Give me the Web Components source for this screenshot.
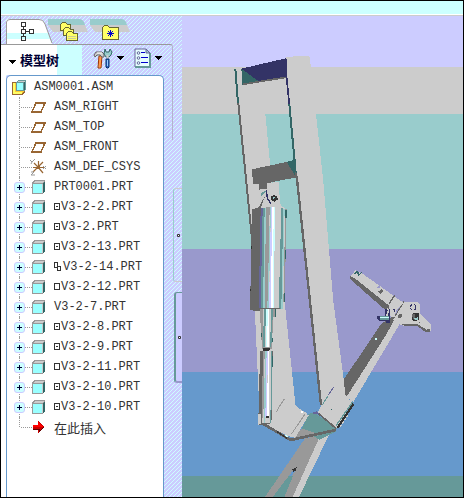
<!DOCTYPE html>
<html lang="zh-CN">
<head>
<meta charset="utf-8">
<title>ASM0001.ASM</title>
<style>
body { margin: 0; }
</style>
</head>
<body>
<cad-window></cad-window>
<script>
const reset = `*{box-sizing:border-box}button{appearance:none;border:0;padding:0;margin:0;background:none;color:inherit;font:inherit;display:block}svg{display:block}`;
const hatch = `linear-gradient(135deg,#cff 0 18%,#ccf 18% 56%,#cff 56% 68%,#ccf 68%) 0 0/4px 4px`;
const define = (name, html) => customElements.define(name, class extends HTMLElement {
  connectedCallback() {
    if (this.shadowRoot) return;
    const t = document.createElement('template');
    t.innerHTML = `<style>${reset}</style>` + (typeof html === 'function' ? html(this) : html);
    this.attachShadow({ mode: 'open' }).append(t.content.cloneNode(true));
  }
});

const icons = {
  asm: `<svg width="14" height="15" viewBox="0 0 14 15" shape-rendering="crispEdges"><path d="M0 2H4V10H13V12L10 15H0Z" fill="#963"/><path d="M1 3H4V11H12L10 14H1Z" fill="#fc3"/><path d="M1 3H3V12H10V14H1Z" fill="#ff6"/><path d="M4 2L6 0H14V9L12 11H4Z" fill="#699"/><path d="M5 2L6 1H13L12 2Z" fill="#ccc"/><rect x="5" y="3" width="6" height="7" fill="#9ff"/><path d="M12 2L13 1V9L12 10Z" fill="#366"/></svg>`,
  plane: `<svg width="15" height="11" viewBox="0 0 15 11" shape-rendering="crispEdges"><path d="M5 1H14L10 10H1Z" fill="none" stroke="#963" stroke-width="1.500"/></svg>`,
  csys: `<svg width="17" height="17" viewBox="0 0 17 17" fill="none"><path d="M8.500 8V2M8 8L4 4M3 8.500H14M8 8L3 13M8 8L13 14M8 8L13 3" stroke="#963" stroke-width="1.200"/><path d="M7 7H10V10H7Z" fill="#963"/><path d="M0 1L2 3L5 0M2 3L1 5M13 7L16 10M16 7L13 10M1 13H4L1 16H5" stroke="#999"/></svg>`,
  part: `<svg width="13" height="14" viewBox="0 0 13 14" shape-rendering="crispEdges"><path d="M0 3L2 0H13V11L11 14H0Z" fill="#999"/><path d="M1 3L3 1H12L10 3Z" fill="#ccc"/><rect x="1" y="4" width="9" height="9" fill="#9ff"/><rect x="10" y="4" width="1" height="9" fill="#ccc"/><path d="M11 3L13 1V11L11 14Z" fill="#366"/></svg>`,
  insert: `<svg width="11" height="12" viewBox="0 0 11 12" shape-rendering="crispEdges"><path d="M0 4H5V0L11 6L5 12V8H0Z" fill="#c00"/><path d="M0 4H5V1L10 6H0Z" fill="#f00"/><path d="M0 8H6V11L11 6" fill="none" stroke="#600"/></svg>`
};
const marks = {
  dot: `<svg width="7" height="10" viewBox="0 0 7 10" shape-rendering="crispEdges"><path d="M.5 1.500H5.500V7.500H.5Z" fill="none" stroke="#333"/><rect x="2" y="4" width="2" height="1" fill="#333"/></svg>`,
  box: `<svg width="7" height="10" viewBox="0 0 7 10" shape-rendering="crispEdges"><path d="M.5 1.500H5.500V7.500H.5Z" fill="none" stroke="#333"/></svg>`,
  pair: `<svg width="9" height="10" viewBox="0 0 9 10" shape-rendering="crispEdges"><path d="M.5 .5H3.500V5.500H.5ZM3.500 4.500H6.500V8.500H3.500Z" fill="none" stroke="#333"/></svg>`
};

define('tree-item', el => {
  const icon = el.getAttribute('icon'), mark = el.getAttribute('mark'), root = icon === 'asm';
  return `<style>
  :host{display:flex;align-items:center;height:20px;padding-left:${root ? 5 : 7}px;position:relative;white-space:pre;color:#333;
    font:12px "Liberation Mono","Noto Sans CJK SC",monospace}
  .cn{font-size:13px}
  .node{width:11px;height:20px;flex:none;display:flex;align-items:center}
  .node::before{content:"";position:absolute;left:12px;top:0;height:${icon === 'insert' ? '50%' : '100%'};border-left:1px dotted #999}
  .lead{width:${icon === 'part' ? 7 : 11}px;border-top:1px dotted #999;flex:none;margin-left:${icon === 'part' ? 0 : -4}px}
  .icon{width:22px;flex:none;display:flex;align-items:center}
  .icon svg{margin-left:${icon === 'insert' ? 1 : icon === 'csys' ? -2 : icon === 'plane' ? -1 : 0}px}
  button{width:11px;height:11px;padding:1px;position:relative;background:#cff;border:1px solid #ccf;border-radius:3px}
  </style>
  ${root ? '' : `<span class="node">${icon === 'part' ? `<button aria-label="展开"><svg width="7" height="7" viewBox="0 0 7 7" shape-rendering="crispEdges"><path d="M1 3.500H6M3.500 1V6" stroke="#003"/></svg></button>` : ''}</span><span class="lead"></span>`}
  <span class="icon">${icons[icon]}</span>${mark ? marks[mark] : ''}<span class="${icon === 'insert' ? 'cn' : ''}"><slot></slot></span>`;
});

const row = (icon, text, mark = '') => `<li><tree-item icon="${icon}" mark="${mark}">${text}</tree-item></li>`;
define('model-tree', `<style>
  :host{display:block;background:#fff;border:1px solid #69c;border-bottom:0;border-radius:5px 5px 0 0;flex:1;margin-left:5px;padding-top:1px}
  ul{list-style:none;margin:0;padding:0}
</style><ul>${[
  row('asm', 'ASM0001.ASM'), row('plane', 'ASM_RIGHT'), row('plane', 'ASM_TOP'), row('plane', 'ASM_FRONT'),
  row('csys', 'ASM_DEF_CSYS'), row('part', 'PRT0001.PRT'), row('part', 'V3-2-2.PRT', 'dot'), row('part', 'V3-2.PRT', 'dot'),
  row('part', 'V3-2-13.PRT', 'dot'), row('part', 'V3-2-14.PRT', 'pair'), row('part', 'V3-2-12.PRT', 'box'), row('part', 'V3-2-7.PRT'),
  row('part', 'V3-2-8.PRT', 'dot'), row('part', 'V3-2-9.PRT', 'dot'), row('part', 'V3-2-11.PRT', 'box'),
  row('part', 'V3-2-10.PRT', 'dot'), row('part', 'V3-2-10.PRT', 'dot'), row('insert', '在此插入')
].join('')}</ul>`);

const folder = (x, y, w, h) => `<path d="M${x + .5} ${y + h - .5}V${y + 2.5}L${x + 2.5} ${y + .5}H${x + 5.5}L${x + 7.5} ${y + 2.5}H${x + w - .5}V${y + h - .5}Z" fill="#ff6" stroke="#663"/>`;
define('nav-tabs', `<style>
  :host{display:flex;height:28px;padding:3px 0 0 5px}
  button{width:42px;height:25px}
  button:first-child{width:47px;margin-right:-5px}
  svg{overflow:visible}
</style>
<button aria-label="模型树" aria-pressed="true"><svg width="47" height="25" viewBox="0 0 47 25">
  <path d="M0 25V3Q0 0 3 0H33Q37 0 39 5L46 25Z" fill="#fff"/><path d="M1 14H42L46 25H1Z" fill="#cff"/><path d="M1 20H44L46 25H1Z" fill="#fff"/>
  <path d="M.5 25V3Q1 .5 4 .5H33Q37 0 39 5L46 24" fill="none" stroke="#999"/>
  <g fill="none" stroke="#333" shape-rendering="crispEdges"><path d="M15.500 3.500H19.500V7.500H15.500ZM15.500 10.500H19.500V14.500H15.500ZM15.500 17.500H19.500V21.500H15.500ZM23.500 10.500H27.500V14.500H23.500ZM17.500 7.500V10.500M17.500 14.500V17.500M19.500 12.500H23.500"/></g></svg></button>
<button aria-label="文件夹浏览器"><svg width="42" height="25" viewBox="0 0 42 25">
  <path d="M0 0H32Q36 1 37 6H0Z" fill="#9cc"/><path d="M0 6H37L40 13H5Z" fill="#ccc"/>
  <g shape-rendering="crispEdges">${folder(12, 3, 11, 9)}${folder(15, 8, 11, 9)}${folder(18, 12, 12, 10)}<path d="M20 17H28M20 19H28" stroke="#cc9"/></g></svg></button>
<button aria-label="收藏夹"><svg width="42" height="25" viewBox="0 0 42 25">
  <path d="M0 0H32Q36 1 37 6H0Z" fill="#9cc"/><path d="M0 6H37L40 13H5Z" fill="#ccc"/>
  <g shape-rendering="crispEdges">${folder(12, 6, 17, 15)}</g><path d="M20.500 11V18M17 14.500H24M18 12L23 17M23 12L18 17" stroke="#00c"/></svg></button>`);

const arrow = `<svg width="7" height="4" viewBox="0 0 7 4" shape-rendering="crispEdges"><path d="M0 0H7L3.500 4Z" fill="#000"/></svg>`;
define('tree-header', `<style>
  :host{display:flex;align-items:center;height:31px;border-top:1px solid #999;padding:0 2px 0 8px;
    background:linear-gradient(90deg,#fff 56px,#cff 56px 81px,transparent 81px)}
  .title{display:flex;align-items:center;gap:4px;font:bold 13px "Noto Sans CJK SC",sans-serif;color:#003;line-height:20px}
  .title svg{margin-top:3px}
  .tool{display:flex;align-items:center;gap:4px}
  .tools{display:flex;gap:10px;margin:-4px 0 0 auto}
</style>
<button class="title">${arrow}<span>模型树</span></button>
<div class="tools">
<button class="tool" aria-label="设置"><svg width="20" height="21" viewBox="0 0 20 21">
  <path d="M6 8H9L8 20H5Z" fill="#fc9" stroke="#930"/><path d="M7 9V19" stroke="#f60"/>
  <path d="M1 7L3 4H9L11 6V9H9L7 7H4L2 9Z" fill="#ccc" stroke="#666"/><path d="M4 5H9" stroke="#fff"/>
  <path d="M12 1L13 4L16 4L17 1L19 4L18 7L16 9H13L11 6Z" fill="#9cc" stroke="#366"/><path d="M14.500 7V11" stroke="#ccc" stroke-width="2"/><path d="M13 11H16V19L15 20H14L13 19Z" fill="#36c" stroke="#036"/><path d="M14.500 12V18" stroke="#9cf"/></svg>${arrow}</button>
<button class="tool" aria-label="显示"><svg width="17" height="20" viewBox="0 0 17 20">
  <path d="M1 1H12L16 5V19H1Z" fill="#e6ffff" stroke="#669"/><path d="M1 19H16V5" fill="none" stroke="#699" stroke-width="2"/><path d="M12 1V5H16Z" fill="#9cc" stroke="#669"/>
  <g fill="none" stroke="#669"><circle cx="4.500" cy="5" r="1.300"/><circle cx="4.500" cy="10" r="1.300"/><circle cx="4.500" cy="15" r="1.300"/></g><path d="M7 4.500H11M7 9.500H14M7 14.500H14" stroke="#00c"/></svg>${arrow}</button>
</div>`);

define('side-rail', `<style>
  :host{display:flex;flex-direction:column;width:18px;flex:none}
  .edge{width:9px;height:96px;border:1px solid #999;border-width:1px 1px 0 0;border-radius:0 3px 0 0;border-right-color:#b3b3cc}
  .grip{align-self:flex-end;width:9px;height:94px;display:flex;align-items:center;justify-content:center;border:1px solid #ccc;border-right:0;border-left-color:#9cc;border-radius:3px 0 0 3px}
  .first{margin:48px 0 10px}
  .second{width:8px;height:91px;background:#ccf;border:2px solid #699;border-width:1px 0 2px 2px;border-color:#699 #699 #99c #699}
</style>
<div class="edge"></div>
<button class="grip first" aria-label="折叠导航器"><svg width="3" height="3"><path d="M.5 .5H2.500V2.500H.5Z" fill="#fff" stroke="#333"/></svg></button>
<button class="grip second" aria-label="折叠浏览器"><svg width="3" height="3"><path d="M.5 .5H2.500V2.500H.5Z" fill="#fff" stroke="#333"/></svg></button>`);

define('model-view', `<style>:host{display:block;flex:1;min-width:0;position:relative;overflow:hidden;background:#699}
  svg{position:absolute;inset:0;width:100%;height:100%}</style>
<svg viewBox="36 48 843 1443" preserveAspectRatio="xMinYMin slice" shape-rendering="crispEdges" role="img" aria-label="ASM0001">
  <path d="M0 0H1200V201H0Z" fill="#ccf"/><path d="M0 201H1200V342H0Z" fill="#ccc"/><path d="M0 342H1200V747H0Z" fill="#9cc"/><path d="M0 747H1200V1116H0Z" fill="#99c"/><path d="M0 1116H1200V1428H0Z" fill="#69c"/><path d="M0 1428H1200V1700H0Z" fill="#699"/>
  <!-- lower beam -->
  <path d="M405 1315L470 1300L372 1491H285Z" fill="#999"/>
  <path d="M368 1413L380 1404L366 1428H356Z" fill="#69c"/><path d="M356 1428H369L343 1491H308Z" fill="#699"/>
  <path d="M366 1408L380 1401L378 1412L370 1415Z" fill="#333"/>
  <path d="M447 1315L484 1292L460 1340L387 1491H368Z" fill="#ccc"/>
  <!-- diagonal arm -->
  <path d="M633 972L680 940L670 990L532 1192L523 1178V1136Z" fill="#666"/>
  <path d="M702 905L735 905L690 970L675 996L550 1206L527 1190L650 988Z" fill="#ccc"/>
  <path d="M655 975L672 960L650 1002L530 1190L523 1180V1150Z" fill="#666"/>
  <path d="M702 905L650 988" stroke="#666" stroke-width="3"/><rect x="615" y="1014" width="5" height="5" fill="#cff"/>
  <!-- end bracket -->
  <path d="M541 829L556 811L576 820L700 908L672 940L650 930L630 914L541 838Z" fill="#ccc"/>
  <path d="M541 829L556 836L657 917L660 934L646 930L630 916L541 838Z" fill="#666"/>
  <path d="M550 825L561 818L564 828L575 820L578 813L568 823L566 817L559 812Z" fill="#366"/>
  <path d="M620 865L630 855L632 862Z" fill="#99c"/><path d="M624 875L636 867L641 873L632 881Z" fill="#666"/>
  <path d="M657 912L674 886" stroke="#666" stroke-width="4"/>
  <path d="M702 905H740L749 914V940L783 973V994L768 997L743 979H708L678 970Z" fill="#ccc"/>
  <path d="M685 969L748 967L781 990V997H768L743 979H708Z" fill="#666"/><path d="M685 969H743L770 985L783 976" stroke="#ccc" stroke-width="7" fill="none"/>
  <path d="M726 942L735 938H743L748 943V957L740 963H730L725 957Z" fill="#333"/><path d="M727 943L735 940V960L728 957Z" fill="#666"/><path d="M732 956L745 951L744 959L738 962Z" fill="#9cc"/>
  <circle cx="690" cy="948" r="6" fill="#666"/><path d="M719 920L726 914M720 924L726 929M732 913L738 918L737 927L731 929" stroke="#336" stroke-width="3" fill="none"/>
  <path d="M646 928H661V970H648L644 940Z" fill="#336"/><path d="M660 925L678 931L674 952L660 949Z" fill="#ccc"/><path d="M667 927L677 929L675 937Z" fill="#336"/>
  <path d="M621 948H659V963H628L621 957Z" fill="#336"/><path d="M630 949H658V960H630Z" fill="#699"/><path d="M631 952H658" stroke="#cff" stroke-width="4"/><path d="M650 923L656 930L650 948" stroke="#ccc" stroke-width="4" fill="none"/>
  <!-- left beam -->
  <path d="M194 201H278L286 342L300 490L328 710L346 925L377 1220L412 1240L365 1312L270 1272L242 655L205 310Z" fill="#ccc"/>
  <path d="M196 207L204 310" stroke="#366" stroke-width="6"/><path d="M205 310L246 715" stroke="#666" stroke-width="6"/>
  <!-- joint at the base -->
  <path d="M415 1242L430 1237L500 1283L498 1295L448 1319L395 1288Z" fill="#699"/>
  <path d="M395 1285L455 1305L370 1318Z" fill="#999"/>
  <path d="M377 1216L404 1242L416 1246L375 1314L350 1300L340 1240Z" fill="#ccc"/>
  <path d="M405 1242L364 1303M320 1235L326 1222L344 1196" stroke="#999" stroke-width="3" fill="none"/>
  <path d="M282 1273L362 1320L498 1290" stroke="#666" stroke-width="8" fill="none"/><path d="M320 1294L352 1316" stroke="#333" stroke-width="3"/><path d="M343 1305L354 1307L352 1314Z" fill="#cff"/><path d="M392 1234H400V1239H392Z" fill="#fff"/>
  <!-- right beam -->
  <path d="M347 175L352 170L418 168L422 195L438 342L460 545L490 905L520 1130L527 1190L548 1206L498 1288L443 1240L455 1213L380 530L348 235Z" fill="#ccc"/>
  <path d="M349 177L350 235L358 313" stroke="#336" stroke-width="5" fill="none"/><path d="M358 313L378 528" stroke="#366" stroke-width="6"/><path d="M380 528L453 1216" stroke="#666" stroke-width="7"/>
  <path d="M443 1239L498 1285" stroke="#666" stroke-width="5"/><path d="M456 1216L474 1188" stroke="#699" stroke-width="3"/><path d="M474 1186L491 1161" stroke="#669" stroke-width="3"/><path d="M428 1236L440 1234L446 1241H430Z" fill="#669"/><rect x="483" y="1226" width="4" height="4" fill="#366"/>
  <path d="M498 1277L548 1206" stroke="#699" stroke-width="4"/><path d="M502 1284L550 1212" stroke="#333" stroke-width="6"/><path d="M510 1280L534 1246" stroke="#ccc" stroke-width="4" stroke-dasharray="7 5"/>
  <!-- cross members -->
  <path d="M214 206L347 175L350 232L266 246Z" fill="#336"/><path d="M214 206L266 244L217 254Z" fill="#366"/><path d="M218 253L348 232" stroke="#666" stroke-width="5"/>
  <path d="M245 508L350 486L378 478L380 532L302 547L291 570H268V553H250Z" fill="#666"/><path d="M350 486L378 478L376 528Z" fill="#366"/>
  <!-- cylinder mount -->
  <path d="M291 550L326 545L330 610L338 626H270L288 585Z" fill="#ccc"/>
  <path d="M270 568H290V582L280 592L272 582Z" fill="#ccc"/><path d="M273 585L286 573" stroke="#699" stroke-width="5"/>
  <path d="M287 583L267 622L246 628L244 740L240 930L272 935L272 625Z" fill="#666"/><path d="M289 570L292 595L303 611" fill="none" stroke="#336" stroke-width="4"/>
  <path d="M302 590L310 585L322 588L323 599L314 605L304 601Z" fill="#333"/><path d="M308 590L316 590L309 598Z" fill="#9cc"/>
  <!-- cylinder -->
  <path d="M274 622H340L348 628L341 933L322 928L266 926Z" fill="#ccc"/>
  <path d="M272 624H278L272 924H266Z" fill="#669"/><path d="M278 624H284L279 924H272Z" fill="#699"/><path d="M284 624H288L284 924H279Z" fill="#9cc"/><path d="M288 622H299L293 924H284Z" fill="#999"/>
  <path d="M300 622H303L296 924H292Z" fill="#9cc"/><path d="M303 622H307L302 924H297Z" fill="#ccf"/><path d="M307 622H311L309 924H302Z" fill="#fff"/><path d="M311 622H314L313 924H309Z" fill="#cff"/>
  <path d="M334 624H340L334 926H326Z" fill="#699"/><path d="M340 626H344L338 926H334Z" fill="#9cc"/><path d="M346 627H350L344 905H340Z" fill="#999"/><path d="M348 630V654M346 750V778M343 880V906" stroke="#366" stroke-width="4"/><path d="M245 738V746M242 866V874" stroke="#333" stroke-width="4"/>
  <path d="M268 925H330" stroke="#666" stroke-width="4"/>
  <!-- upper rod -->
  <path d="M269 928H318V952H309L306 1046H276L271 960Z" fill="#999"/><path d="M280 928H304L300 1042H281Z" fill="#ccc"/><path d="M281 928H287L286 1040H280Z" fill="#699"/><path d="M289 928H293V1040H289Z" fill="#cff"/><path d="M293 928H298L297 1040H292Z" fill="#fff"/><path d="M304 928H309L304 1040H300Z" fill="#699"/><path d="M316 928V952M274 1000V1010M308 1015V1025" stroke="#366" stroke-width="4"/>
  <path d="M280 1044H302L297 1053H278Z" fill="#333"/>
  <!-- lower rod -->
  <path d="M270 1053H308L305 1260L300 1272H266V1240Z" fill="#666"/><path d="M279 1053H305L301 1270H276Z" fill="#ccc"/><path d="M279 1053H284L280 1255H275Z" fill="#999"/><path d="M285 1053H290L286 1270H281Z" fill="#9cc"/><path d="M290 1053H294L290 1250H286Z" fill="#ccf"/><path d="M294 1053H298L296 1250H291Z" fill="#fff"/><path d="M304 1053H307L304 1270H301Z" fill="#699"/>
  <path d="M264 1241H274V1275H264Z" fill="#ccc"/><path d="M264 1240H273V1248M266 1274H284" stroke="#666" stroke-width="3" fill="none"/><rect x="288" y="1248" width="9" height="5" fill="#333"/><path d="M308 1068V1100" stroke="#366" stroke-width="3"/>
</svg>`);

define('cad-window', `<style>
  :host{display:flex;flex-direction:column;min-height:100vh;border:1px solid #000;box-sizing:border-box}
  .strip{height:15px;flex:none;background:#cff;border-bottom:1px solid #ccc;box-shadow:inset 0 -1px #fff}
  main{display:flex;flex:1}
  aside{width:181px;flex:none;display:flex;flex-direction:column;background:${hatch}}
  .body{display:flex;flex:1}
  .col{flex:1;display:flex;flex-direction:column;background:linear-gradient(90deg,#fff 5px,transparent 5px)}
</style>
<div class="strip"></div>
<main><aside><nav-tabs></nav-tabs><div class="body"><div class="col"><tree-header></tree-header><model-tree></model-tree></div><side-rail></side-rail></div></aside><model-view></model-view></main>`);
</script>
</body>
</html>
